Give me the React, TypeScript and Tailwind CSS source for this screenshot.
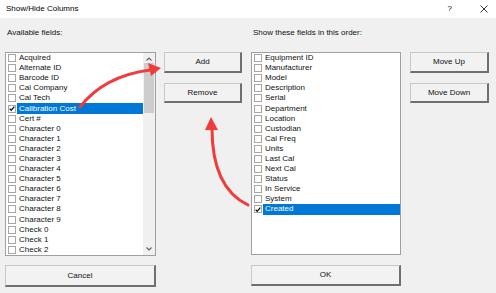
import React from "react";

const available = [
  "Acquired",
  "Alternate ID",
  "Barcode ID",
  "Cal Company",
  "Cal Tech",
  "Calibration Cost",
  "Cert #",
  "Character 0",
  "Character 1",
  "Character 2",
  "Character 3",
  "Character 4",
  "Character 5",
  "Character 6",
  "Character 7",
  "Character 8",
  "Character 9",
  "Check 0",
  "Check 1",
  "Check 2",
];

const shown = [
  "Equipment ID",
  "Manufacturer",
  "Model",
  "Description",
  "Serial",
  "Department",
  "Location",
  "Custodian",
  "Cal Freq",
  "Units",
  "Last Cal",
  "Next Cal",
  "Status",
  "In Service",
  "System",
  "Created",
];

const Check = ({ checked }: { checked: boolean }) => (
  <span className="w-[8px] h-[8px] border border-[#a6a6a6] bg-white flex items-center justify-center shrink-0">
    {checked && (
      <svg width="7" height="7" viewBox="0 0 7 7">
        <path d="M0.8 3.6 L2.6 5.6 L6.2 1.2" stroke="#000" strokeWidth="1.4" fill="none" />
      </svg>
    )}
  </span>
);

const Row = ({ label, selected }: { label: string; selected: boolean }) => (
  <div className="h-[10.1px] flex items-center pl-[2px]">
    <Check checked={selected} />
    <span
      className={
        "flex-1 ml-[1px] pl-[2px] h-full flex items-center leading-none " +
        (selected ? "bg-[#0078d7] text-white" : "text-[#111]")
      }
    >
      {label}
    </span>
  </div>
);

const Button = ({ label, className }: { label: string; className: string }) => (
  <div
    className={
      "flex items-center justify-center bg-[#f2f2f2] border-t border-l border-[#c8c8c8] border-r-2 border-b-2 border-r-[#6f6f6f] border-b-[#6f6f6f] text-[#111] " +
      className
    }
  >
    {label}
  </div>
);

export default function App() {
  return (
    <div
      className="relative w-[496px] h-[293px] bg-[#f0f0f0] overflow-hidden text-[8px]"
      style={{ fontFamily: '"Liberation Sans", Arial, sans-serif' }}
    >
      {/* title bar */}
      <div className="h-[18px] bg-white flex items-center pl-[6px] pr-[8px]">
        <span className="text-black text-[8px]">Show/Hide Columns</span>
        <span className="ml-auto mr-[28px] text-[8px] text-black">?</span>
        <svg width="8" height="8" viewBox="0 0 8 8">
          <path d="M0.5 0.5 L7.5 7.5 M7.5 0.5 L0.5 7.5" stroke="#222" strokeWidth="0.9" />
        </svg>
      </div>

      <div className="flex pl-[5px]">
        {/* left column */}
        <div className="w-[151px] flex flex-col">
          <div className="mt-[10px] h-[10px] leading-[10px] pl-[2px] text-[#111]">Available fields:</div>
          <div className="mt-[14px] h-[204px] bg-white border border-[#a0a0a0] flex overflow-hidden">
            <div className="flex-1 flex flex-col">
              {available.map((a) => (
                <Row key={a} label={a} selected={a === "Calibration Cost"} />
              ))}
            </div>
            <div className="w-[12px] bg-[#f0f0f0] flex flex-col items-center">
              <svg width="6" height="4" viewBox="0 0 6 4" className="mt-[4px]">
                <path d="M0.5 3.5 L3 1 L5.5 3.5" stroke="#606060" strokeWidth="1.1" fill="none" />
              </svg>
              <div className="mt-[2px] w-[10px] h-[50px] bg-[#cdcdcd]" />
              <svg width="6" height="4" viewBox="0 0 6 4" className="mt-auto mb-[4px]">
                <path d="M0.5 0.5 L3 3 L5.5 0.5" stroke="#606060" strokeWidth="1.1" fill="none" />
              </svg>
            </div>
          </div>
          <Button label="Cancel" className="mt-[9px] h-[22px]" />
        </div>

        {/* add / remove */}
        <div className="ml-[8px] w-[78px] flex flex-col pt-[34px]">
          <Button label="Add" className="h-[21px]" />
          <Button label="Remove" className="mt-[10px] h-[20px]" />
        </div>

        {/* right column */}
        <div className="ml-[9px] w-[150px] flex flex-col">
          <div className="mt-[10px] h-[10px] leading-[10px] pl-[2px] text-[#111]">Show these fields in this order:</div>
          <div className="mt-[14px] h-[203px] bg-white border border-[#a0a0a0] flex flex-col">
            {shown.map((s) => (
              <Row key={s} label={s} selected={s === "Created"} />
            ))}
          </div>
          <Button label="OK" className="mt-[10px] h-[21px]" />
        </div>

        {/* move up / down */}
        <div className="ml-[9px] w-[79px] flex flex-col pt-[34px]">
          <Button label="Move Up" className="h-[21px]" />
          <Button label="Move Down" className="mt-[10px] h-[20px]" />
        </div>
      </div>

      {/* annotation arrows */}
      <svg className="absolute inset-0 pointer-events-none" width="496" height="293" viewBox="0 0 496 293">
        <path d="M80 107 Q104 76 150 70" stroke="#f23b3b" strokeWidth="3" fill="none" strokeLinecap="round" />
        <polygon points="161,68 148,63 151,76" fill="#f23b3b" />
        <path d="M248 205 Q212 188 212 128" stroke="#f23b3b" strokeWidth="3" fill="none" strokeLinecap="round" />
        <polygon points="211,117 205,130 218,130" fill="#f23b3b" />
      </svg>
    </div>
  );
}
